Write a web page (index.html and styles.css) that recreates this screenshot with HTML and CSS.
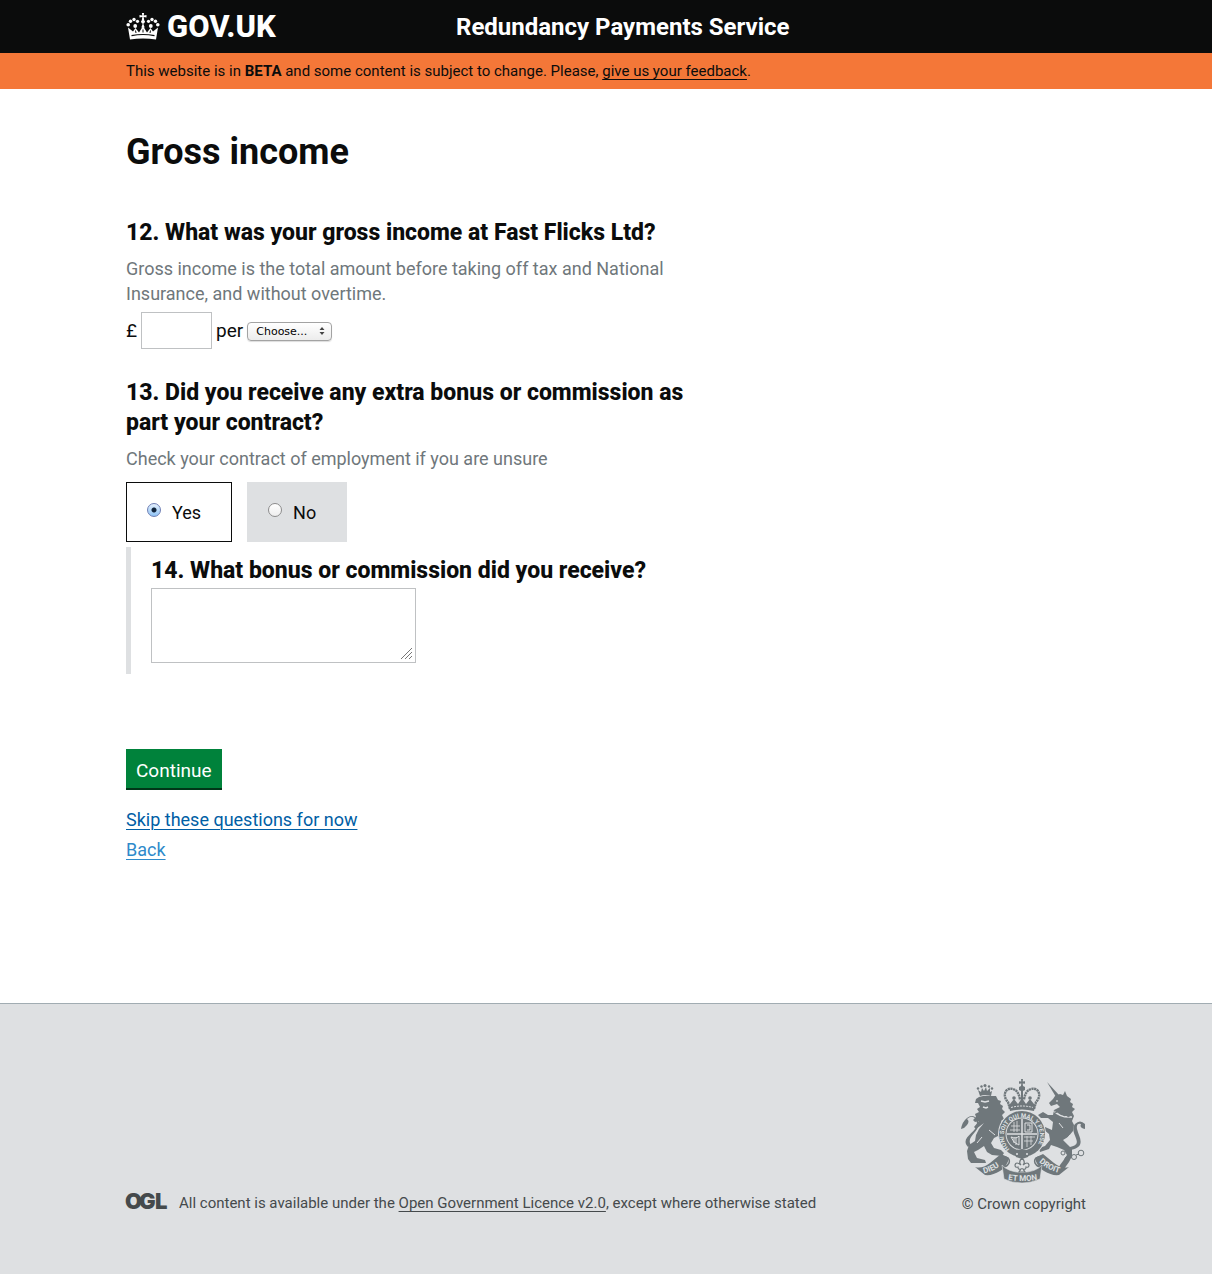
FILE: index.html
```html
<!DOCTYPE html>
<html lang="en">
<head>
<meta charset="utf-8">
<meta name="viewport" content="width=device-width, initial-scale=1">
<title>Gross income - Redundancy Payments Service</title>
<link rel="stylesheet" href="styles.css">
</head>
<body>
<header class="header">
  <div class="container header-inner">
    <a class="logo" href="#">
      <svg class="crown" viewBox="0 0 34 28" aria-hidden="true">
        <g fill="currentColor">
          <path d="M4 26.500 2 14.500 7 18.500 9.500 15 13 19.500 17 13 21 19.500 24.500 15 27 18.500 32 14.500 30 26.500Q17 24.500 4 26.500Z"/>
          <circle cx="2.200" cy="11.800" r="1.800"/><circle cx="4.500" cy="8.300" r="1.700"/><circle cx="8" cy="6.500" r="1.700"/><circle cx="11.500" cy="8.300" r="1.600"/>
          <circle cx="31.800" cy="11.800" r="1.800"/><circle cx="29.500" cy="8.300" r="1.700"/><circle cx="26" cy="6.500" r="1.700"/><circle cx="22.500" cy="8.300" r="1.600"/>
          <circle cx="9.200" cy="13" r="1.900"/><circle cx="24.800" cy="13" r="1.900"/>
          <path d="M15.900 0h2.200l-.4 2.500 2.800-.5v2.600l-2.800-.5.5 3.200a1.900 1.900 0 1 1-2.400 0l.5-3.200-2.800.5V2l2.800.5z"/>
          <path d="m17 10 1.700 4.500h-3.400z"/>
        </g>
        <path d="M5.500 22.700Q17 20.300 28.500 22.700" fill="none" stroke="#0b0c0c" stroke-width="1.200"/>
        <path d="m9.500 17.500.5 2.500m14.500-2.500L24 20M17 16.500v3" stroke="#0b0c0c"/>
      </svg>
      <span>GOV.UK</span>
    </a>
    <span class="service">Redundancy Payments Service</span>
  </div>
</header>
<div class="phase">
  <p class="container phase-text">This website is in <strong>BETA</strong> and some content is subject to change. Please, <a href="#">give us your feedback</a>.</p>
</div>
<main class="container main">
  <form class="column">
    <h1>Gross income</h1>

    <section class="question">
      <h2 id="q12">12. What was your gross income at Fast Flicks Ltd?</h2>
      <p class="hint" id="q12-hint">Gross income is the total amount before taking off tax and National Insurance, and without overtime.</p>
      <div class="amount">
        <label for="income">£</label>
        <input class="field money" id="income" type="text" aria-describedby="q12-hint">
        <label for="period">per</label>
        <span class="picker">
          <select id="period"><option>Choose...</option></select>
          <svg viewBox="0 0 6 8" aria-hidden="true"><path d="M.5 3 3 0l2.500 3zM.5 5 3 8l2.500-3z"/></svg>
        </span>
      </div>
    </section>

    <section class="question">
      <h2 id="q13">13. Did you receive any extra bonus or commission as part your contract?</h2>
      <p class="hint">Check your contract of employment if you are unsure</p>
      <div class="choices" role="radiogroup" aria-labelledby="q13">
        <label class="choice"><input type="radio" name="bonus" value="yes" checked>Yes</label>
        <label class="choice"><input type="radio" name="bonus" value="no">No</label>
      </div>
      <div class="nested">
        <h2><label for="details">14. What bonus or commission did you receive?</label></h2>
        <div class="details">
          <textarea class="field" id="details"></textarea>
          <svg class="grip" viewBox="0 0 11 11" aria-hidden="true"><path d="M0 11 11 0M4 11l7-7M8 11l3-3"/></svg>
        </div>
      </div>
    </section>

    <button class="button" type="button">Continue</button>
    <nav class="links">
      <a href="#">Skip these questions for now</a>
      <a class="back" href="#">Back</a>
    </nav>
  </form>
</main>
<footer class="footer">
  <div class="container footer-inner">
    <div class="licence">
      <svg class="ogl" viewBox="0 0 41 18" role="img" aria-label="Open Government Licence"><text y="17" x="-1 13 29">OGL</text></svg>
      <p>All content is available under the <a href="#">Open Government Licence v2.0</a>, except where otherwise stated</p>
    </div>
    <a class="copyright" href="#">
      <svg class="crest" viewBox="0 0 126 104" aria-hidden="true">
        <defs>
          <path id="garter" d="M49.500 70A18.200 18.200 0 1 1 74.500 70"/>
          <path id="left-scroll" d="M24 94.500Q35 92 45 83"/>
          <path id="mid-scroll" d="M46 100.500Q62 103.500 79 100.500"/>
          <path id="right-scroll" d="M79 83Q89 92 102 94.500"/>
        </defs>
        <g fill="#6f777b">
          <!-- lion -->
          <path d="m20 17-2-6 3 2 1-4 2 3 2-4 1 4 3-3v4l2-1-1 5Q25 15 20 17Z"/>
          <circle cx="18" cy="9.500" r="1.200"/><circle cx="21.500" cy="7.500" r="1.200"/><circle cx="25" cy="6.500" r="1.500"/><circle cx="29" cy="7.500" r="1.200"/><circle cx="32" cy="9.500" r="1.200"/>
          <path d="M19 18Q25 16 32 17L36 17 38 21 41 22 40 25 43 27 42 30 45 33 42 36 44 40 41 42 44 46 46 50 43 54 47 58 50 62 48 68 44 67 45 63 40 61 38 57 34 59 31 64 34 69 41 71 44 74 42 77 32 76 27 73 24 67 18 71 14 73 17 79 25 81 26 84 11 84 8 80 7 72 9 66 15 62 16 56 19 50 24 44 16 50 14 48 19 42 15 43 13 41 16 38 15 35 19 33 17 30 20 28 18 24 15 24 16 20Z"/>
          <path d="M8 68C-2 57 22 53 16 41Q13 35 7 40Q10 42 7 46Q5 49 1 50Q2 43 7 39Q13 34 18 41C22 53 5 57 11 66Z"/>
          <!-- unicorn -->
          <path d="m87 3 12 13-3 2Z"/>
          <path d="M95 17 100 15 103 16 105 12 107 17 111 20 110 23 113 25 112 28 115 30 112 33 114 37 112 42 114 46 113 52 108 58 103 61 108 66 112 70 112 77 109 83 104 90 98 91 100 86 103 82 107 76 104 71 97 68 91 66 89 70 80 73 79 69 85 67 90 61 89 55 83 50 79 52 78 48 85 48 92 51 93 43 88 39 81 39 78 36 83 33 88 36 93 36 94 31 100 28 97 25 91 27 89 24 93 20Z"/>
          <path d="M110 68C126 65 108 54 115 45Q120 40 125 45V50Q119 49 121 45Q116 44 117 50C119 58 127 68 110 71Z"/>
        </g>
        <g fill="none" stroke="#dee0e2" stroke-width="1">
          <path d="m21 22 4 1 4-1m-6 6 3 1 2-1M93 31Q100 39 112 38" stroke-width="1.500"/>
          <path d="m17 64 5-6m7-7 6 5m71 5 4-5M99 44l4 5"/>
          <circle cx="97" cy="22" r=".5"/>
        </g>
        <g fill="none" stroke="#6f777b">
          <path d="m94 31 2 3 2-3 2 4 3-2 1 4 3-2 1 3 3-2"/>
          <circle cx="103" cy="74" r="2"/><circle cx="107" cy="80" r="2"/><circle cx="114" cy="78" r="2.500"/><circle cx="121" cy="74" r="2.800"/><path d="m109 79 3-1m4-2 3-1"/>
        </g>
        <!-- royal crown -->
        <path d="M50 30 48 23C42 17 45 8 53 10Q59 12 60 21M74 30 76 23C82 17 79 8 71 10Q65 12 64 21" fill="none" stroke="#6f777b" stroke-width="2.400" stroke-dasharray="2.200 .5"/>
        <g fill="#6f777b">
          <path d="M61 0h2l-.3 2.500 2.300-.3v2.600l-2.300-.3.3 2.500 2 1v3l-2 1v11h-2V12l-2-1V8l2-1 .3-2.500-2.300.3V2.200l2.300.3zM50 25l4-5 4 5 4-6 4 6 4-5 4 5v5H50z"/>
          <circle cx="54" cy="19" r="1.800"/><circle cx="70" cy="19" r="1.800"/>
          <path d="M49 27Q62 23 75 27l-1 5Q62 29 50 32z"/>
        </g>
        <path d="M51 28.500q11-3 22 0" fill="none" stroke="#dee0e2" stroke-dasharray="2 1"/>
        <!-- garter and shield -->
        <circle cx="62" cy="55" r="24" fill="#dee0e2"/>
        <circle cx="62" cy="55" r="23" fill="#6f777b"/>
        <circle cx="62" cy="55" r="16.500" fill="#dee0e2"/>
        <circle cx="62" cy="55" r="15.500" fill="#6f777b"/>
        <g fill="none" stroke="#dee0e2">
          <path d="M62 40v30M47 55h30" stroke-width="1.500"/>
          <path d="M51 47h9M50 51h10M54 43v10M57 42v11M64 58h11M64 62h9M67 57v11M71 57v9" stroke-width=".8"/>
          <path d="M65 44h7v9h-7zM67 46h3v5h-3M51 58q6 2 8-1v9q-6-2-8-8M54 59v5m2-5v7"/>
        </g>
        <text class="motto garter-text"><textPath href="#garter">HONI SOIT QUI MAL Y PENSE</textPath></text>
        <path d="m53 72 9-2 9 2-3 6-6 2-6-2z" fill="#6f777b"/><circle cx="57" cy="75" r="1" fill="#dee0e2"/><circle cx="67" cy="75" r="1" fill="#dee0e2"/>
        <!-- scrolls -->
        <path d="M15 88Q22 90 30 84L41 75 49 79Q47 88 40 92 32 97 25 96ZM109 88Q102 90 94 84L83 75 75 79Q77 88 84 92 92 97 99 96Z" fill="#6f777b"/>
        <path d="M42 77q9 1 7 7-3 5-6 3M82 77q-9 1-7 7 3 5 6 3" fill="none" stroke="#6f777b" stroke-width="1.500"/>
        <path d="M42 86Q48 93 62 93.500 76 93 82 86L80 100Q71 104 62 104 52 104 44 100Z" fill="#6f777b" stroke="#dee0e2" stroke-width=".6"/>
        <path d="M62 79q4 4 1 7 5-4 6 0 0 3-3 2 0 3-3 2l2 3h-6l2-3q-3 1-3-2-3 1-3-2 1-4 6 0-3-3 1-7Z" fill="#dee0e2" stroke="#6f777b" stroke-width="1.200"/>
        <text class="motto"><textPath href="#left-scroll">DIEU</textPath></text>
        <text class="motto"><textPath href="#mid-scroll" startOffset="2">ET MON</textPath></text>
        <text class="motto"><textPath href="#right-scroll">DROIT</textPath></text>
      </svg>
      <span>© Crown copyright</span>
    </a>
  </div>
</footer>
</body>
</html>
```
FILE: styles.css
```css
* { box-sizing: border-box; }

body {
  display: flex;
  flex-direction: column;
  min-height: 100vh;
  margin: 0;
  background: #fff;
  color: #0b0c0c;
  font: 18px/25px Roboto, "Liberation Sans", sans-serif;
}

h1, h2, p { margin: 0; }

.container {
  width: 100%;
  max-width: 990px;
  margin: 0 auto;
  padding: 0 15px;
}

/* Header */
.header { background: #0b0c0c; color: #fff; }

.header-inner {
  display: grid;
  grid-template-columns: 330px 1fr;
  align-items: center;
  min-height: 53px;
}

.logo {
  display: flex;
  align-items: center;
  gap: 7px;
  color: #fff;
  font-size: 31px;
  font-weight: 800;
  text-decoration: none;
}

.crown { width: 34px; height: 28px; }

.service { font-size: 24px; font-weight: 700; line-height: 30px; }

.phase { background: #f47738; }

.phase-text { padding-top: 8px; padding-bottom: 8px; font-size: 15px; line-height: 20px; }

.phase-text a,
.licence a { color: inherit; text-underline-offset: 3px; }

/* Form */
.main { flex: 1 0 auto; padding-top: 43px; padding-bottom: 138px; }

.column { max-width: 580px; }

h1 { margin-bottom: 46px; font-size: 36px; line-height: 40px; }

h2 { font-size: 23px; font-weight: 800; line-height: 30px; }

.question { margin-bottom: 29px; }

.hint { margin-top: 8px; color: #6f777b; }

.field {
  border: 1px solid #bfc1c3;
  border-radius: 0;
  background: #fff;
  font: inherit;
}

.amount { display: flex; align-items: center; gap: 4px; margin-top: 6px; font-size: 19px; }

.money { width: 71px; height: 37px; padding: 4px; }

.picker { position: relative; display: flex; padding-top: 2px; }

.picker select {
  width: 85px;
  height: 19px;
  padding: 0 8px;
  appearance: none;
  border: 1px solid #a3a3a3;
  border-radius: 4px;
  background: linear-gradient(#fff, #ececec);
  box-shadow: 0 1px 1px #ddd;
  color: #000;
  font: 11px/16px "DejaVu Sans", sans-serif;
}

.picker svg {
  position: absolute;
  top: 7px;
  right: 7px;
  width: 6px;
  height: 8px;
  fill: #444;
  pointer-events: none;
}

.choices { display: flex; gap: 15px; margin-top: 11px; }

.choice {
  display: flex;
  align-items: center;
  gap: 11px;
  height: 60px;
  padding: 0 30px 0 20px;
  border: 1px solid #dee0e2;
  background: #dee0e2;
}

.choice:has(:checked) { border-color: #0b0c0c; background: #fff; }

.choice input {
  width: 14px;
  height: 14px;
  margin: 0 0 4px;
  appearance: none;
  border: 1px solid #8c8c8c;
  border-radius: 50%;
  background: linear-gradient(#fff, #eee);
}

.choice input:checked {
  border-color: #6f7fb5;
  background: radial-gradient(circle, #10243c 2px, transparent 3px), linear-gradient(#e4f0fd, #8fc4f5);
}

.nested {
  margin-top: 5px;
  padding: 9px 0 11px 20px;
  border-left: 5px solid #dee0e2;
}

.details { position: relative; width: 265px; margin-top: 2px; }

.details textarea {
  display: block;
  width: 100%;
  height: 75px;
  padding: 4px;
  resize: none;
}

.grip {
  position: absolute;
  right: 4px;
  bottom: 4px;
  width: 11px;
  height: 11px;
  fill: none;
  stroke: #777;
  pointer-events: none;
}

.button {
  display: block;
  height: 41px;
  margin-top: 75px;
  padding: 2px 10px 0;
  border: 0;
  background: #00823b;
  box-shadow: inset 0 -2px #003618;
  color: #fff;
  font: inherit;
  font-size: 19px;
}

.links { display: flex; flex-direction: column; align-items: flex-start; margin-top: 15px; line-height: 30px; }

.links a { color: #005ea5; text-underline-offset: 3px; text-decoration-thickness: 1px; }

.links .back { color: #2e8aca; }

/* Footer */
.footer {
  padding: 75px 0 60px;
  border-top: 1px solid #a1acb2;
  background: #dee0e2;
  color: #454a4c;
  font-size: 15px;
  line-height: 20px;
}

.footer-inner { display: flex; align-items: flex-end; justify-content: space-between; }

.licence { display: flex; gap: 12px; padding-bottom: 1px; }

.ogl { width: 41px; height: 18px; margin-top: -1px; overflow: visible; }

.ogl text { fill: #454a4c; font: 900 22px Inter, sans-serif; }

.copyright { display: flex; flex-direction: column; align-items: flex-end; gap: 11px; color: inherit; text-decoration: none; }

.crest { width: 126px; height: 104px; }

.motto { fill: #dee0e2; font: 700 8px Roboto, sans-serif; }

.garter-text { font-size: 6px; }
```
